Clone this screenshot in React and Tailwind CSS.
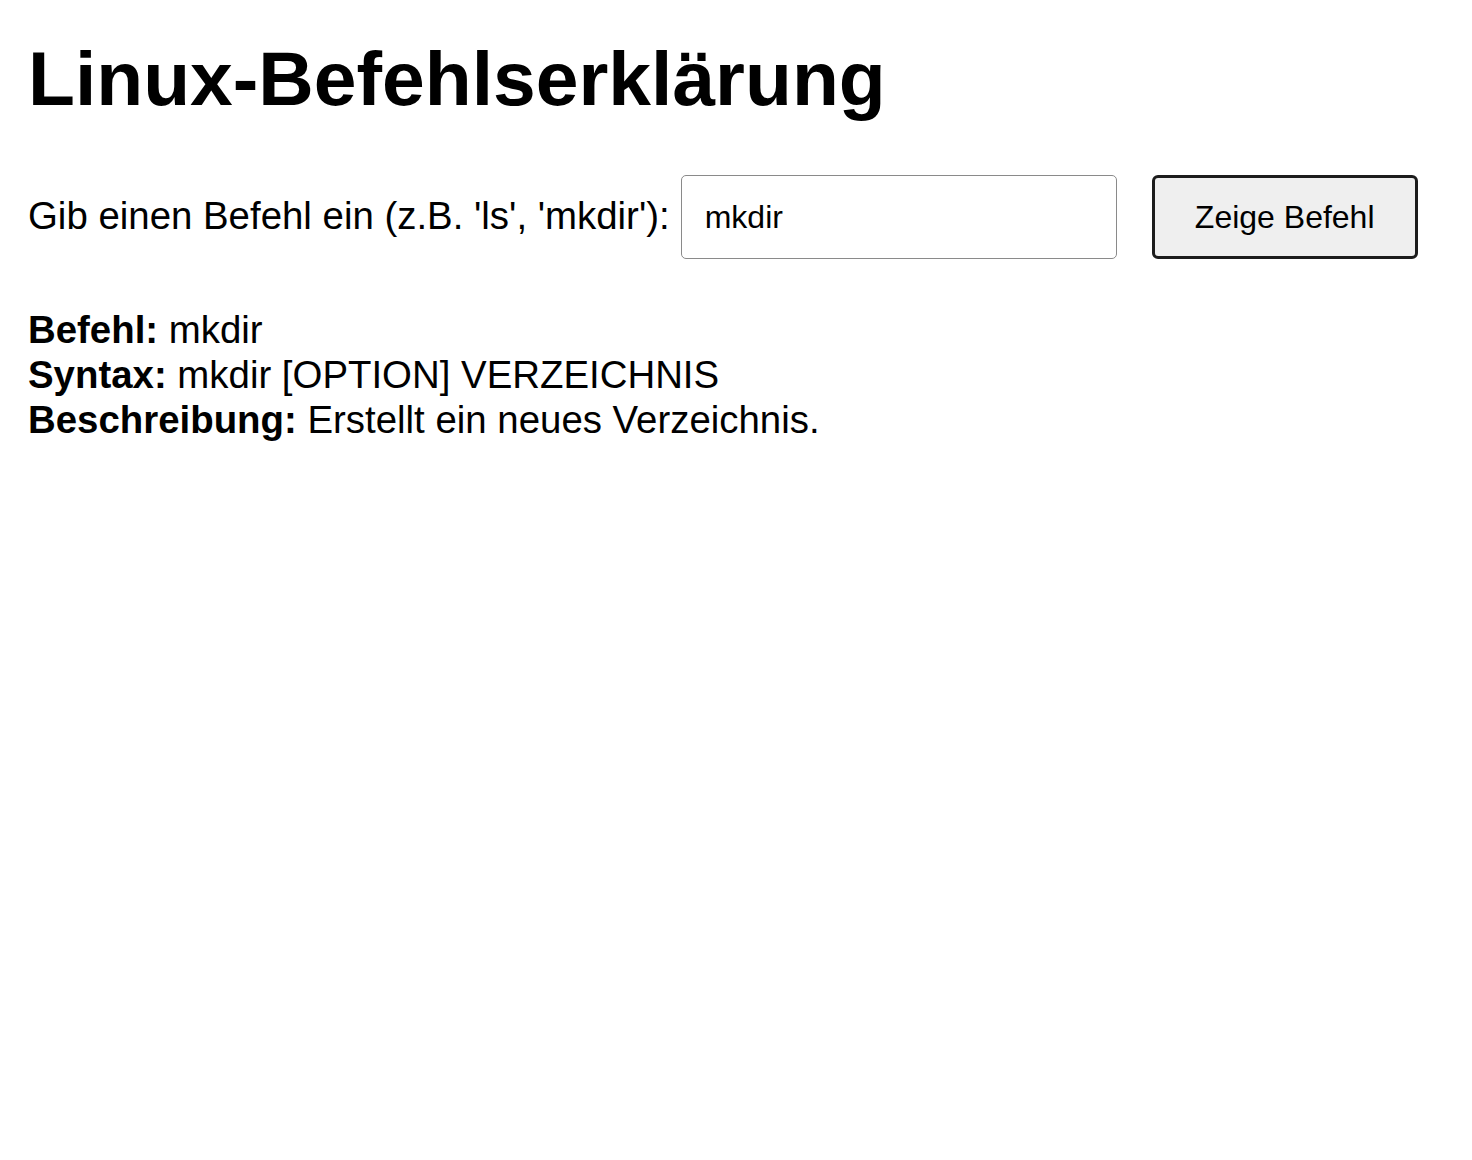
import React, { useState } from 'react';

const commands = {
  ls: {
    syntax: 'ls [OPTION] [DATEI]',
    description: 'Listet den Inhalt eines Verzeichnisses auf.',
  },
  mkdir: {
    syntax: 'mkdir [OPTION] VERZEICHNIS',
    description: 'Erstellt ein neues Verzeichnis.',
  },
};

export default function App() {
  const [input, setInput] = useState('mkdir');
  const [shown, setShown] = useState('mkdir');

  const info = commands[shown];

  return (
    <div className="min-h-screen bg-white px-[28px] text-black font-['Liberation_Sans',Arial,sans-serif]">
      {/* Titel */}
      <h1 className="pt-[34px] text-[76.8px] font-bold leading-[88px]">Linux-Befehlserklärung</h1>

      {/* Eingabe */}
      <div className="mt-[53px] flex items-center">
        <label htmlFor="cmd" className="text-[38.4px] leading-[44px] -mt-[3px]">
          Gib einen Befehl ein (z.B. 'ls', 'mkdir'):
        </label>
        <input
          id="cmd"
          value={input}
          onChange={(e) => setInput(e.target.value)}
          className="ml-[11px] h-[84px] w-[436px] rounded-[5px] border border-[#8a8a8a] bg-white px-[23px] text-[32px] outline-none"
        />
        <button
          onClick={() => setShown(input.trim())}
          className="ml-[35px] h-[84px] w-[266px] rounded-[6px] border-[3px] border-[#1c1c1c] bg-[#efefef] text-[32px]"
        >
          Zeige Befehl
        </button>
      </div>

      {/* Ergebnis */}
      <div className="mt-[48px] text-[38.4px] leading-[45px]">
        {info ? (
          <>
            <div><span className="font-bold">Befehl:</span> {shown}</div>
            <div><span className="font-bold">Syntax:</span> {info.syntax}</div>
            <div><span className="font-bold">Beschreibung:</span> {info.description}</div>
          </>
        ) : (
          <div>Befehl nicht gefunden.</div>
        )}
      </div>
    </div>
  );
}
